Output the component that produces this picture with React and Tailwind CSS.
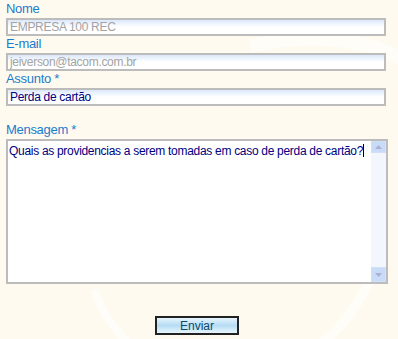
import React from 'react'

function Field({ label, value, disabled }) {
  return (
    <div className="flex flex-col">
      <label className="h-[17px] leading-[16px] text-[13px] tracking-[-0.3px] text-[#1a7ccc]">{label}</label>
      <input
        type="text"
        defaultValue={value}
        disabled={disabled}
        className={`h-[18px] w-[380px] border-2 border-[#bcbcbc] bg-gradient-to-b from-[#dbe8fb] via-white to-white px-[2px] text-[12px] leading-[14px] tracking-[-0.3px] outline-none ${disabled ? 'text-[#a3a3a3]' : 'text-[#000080]'}`}
      />
    </div>
  )
}

function App() {
  return (
    <div className="relative h-[339px] w-[398px] overflow-hidden bg-[#fffaf0] font-['Liberation_Sans',sans-serif]">
      {/* watermark */}
      <svg className="pointer-events-none absolute inset-0" width="398" height="339">
        <path d="M250 46 C 320 30, 390 40, 430 80" stroke="#ffffff" strokeWidth="14" fill="none" opacity="0.5" />
        <path d="M95 290 C 100 310, 115 330, 130 345" stroke="#ffffff" strokeWidth="8" fill="none" opacity="0.6" />
        <path d="M380 250 C 370 290, 350 320, 320 345" stroke="#ffffff" strokeWidth="10" fill="none" opacity="0.5" />
      </svg>

      <div className="relative flex flex-col px-[6px] pt-[1px]">
        <Field label="Nome" value="EMPRESA 100 REC" disabled />
        <Field label="E-mail" value="jeiverson@tacom.com.br" disabled />
        <Field label="Assunto *" value="Perda de cartão" />

        <label className="mt-[16px] h-[17px] leading-[16px] text-[13px] tracking-[-0.3px] text-[#1a7ccc]">Mensagem *</label>
        <div className="flex h-[145px] w-[382px] border-2 border-[#bcbcbc] bg-white">
          <div className="flex-1 whitespace-nowrap px-[1px] pt-[1px] text-[12px] leading-[14px] tracking-[-0.3px] text-[#000080]">
            Quais as providencias a serem tomadas em caso de perda de cartão?<span className="inline-block h-[13px] w-px translate-y-[2px] bg-black"></span>
          </div>
          <div className="flex w-[15px] flex-col justify-between bg-[#f3f6fc]">
            <div className="flex h-[12px] items-center justify-center border border-[#d0e0f8] bg-[#c8dcf8]">
              <svg width="7" height="4" viewBox="0 0 7 4"><path d="M3.5 0 L7 4 L0 4 Z" fill="#aab0d4" /></svg>
            </div>
            <div className="flex h-[15px] items-center justify-center border border-[#d0e0f8] bg-[#c8dcf8]">
              <svg width="7" height="4" viewBox="0 0 7 4"><path d="M0 0 L7 0 L3.5 4 Z" fill="#aab0d4" /></svg>
            </div>
          </div>
        </div>

        <div className="mt-[32px] flex justify-center">
          <button className="ml-[-4px] h-[19px] w-[84px] border-2 border-[#222] bg-gradient-to-b from-[#e6f4fc] via-[#b6dcf4] to-[#e8f6fc] text-[12px] leading-[14px] text-[#0a4a70]">
            Enviar
          </button>
        </div>
      </div>
    </div>
  )
}

export default App
